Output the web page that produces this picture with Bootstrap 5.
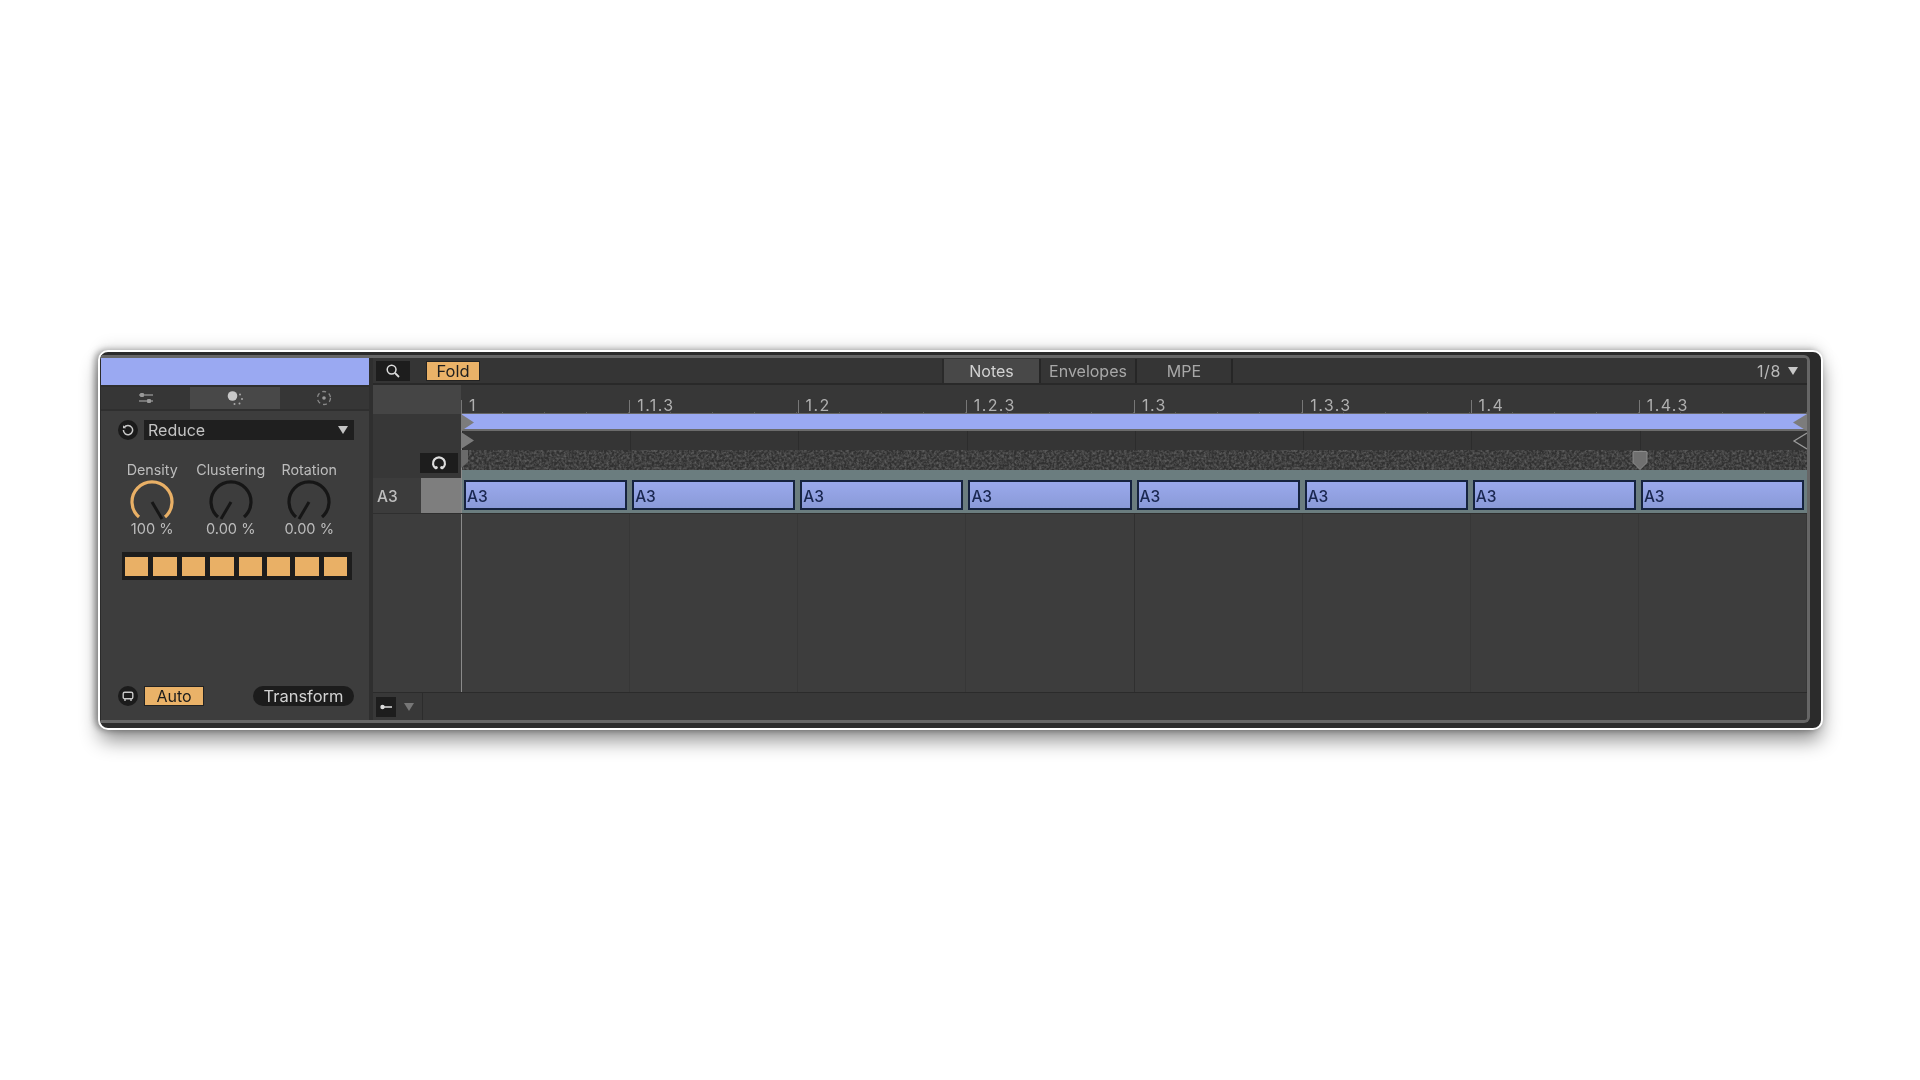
<!DOCTYPE html>
<html lang="en">
<head>
<meta charset="utf-8">
<title>Reduce transform</title>
<link href="https://cdn.jsdelivr.net/npm/bootstrap@5.3.0/dist/css/bootstrap.min.css" rel="stylesheet">
<style>
html,body{height:100%;background:#fff;margin:0}
body{font-family:Inter,"Liberation Sans",sans-serif;overflow:hidden;padding:350px 0 0 98px}
.shell{width:1725px;height:380px;background:#2b2b2b;border:2px solid #fff;border-radius:10px;padding:3px 11px 5px 1px;box-shadow:0 12px 20px -2px rgba(0,0,0,.45),-3px 0 6px rgba(0,0,0,.35),0 -6px 14px rgba(0,0,0,.08)}
.inner{height:100%;background:#3d3d3d;border:solid #666;border-width:3px 3px 3px 0;border-radius:0 6px 6px 0;overflow:hidden;color:#c4c4c4;font-size:16px;line-height:1;filter:blur(.55px)}
.side{width:268px;flex:none}
.clipbar{height:27px;background:#9aa9f2;flex:none}
.seg{height:26px;background:#363636;border-top:2px solid #2f2f2f;border-bottom:2px solid #2f2f2f}
.seg>div{flex:1}
.seg .segact{background:#484848}
.round{width:20px;height:20px;border-radius:50%;background:#1b1b1b;flex:none}
.pick{width:210px;height:20px;background:#1f1f1f;padding:0 6px 0 4px;font-size:16px}
.tri{width:0;height:0;border-left:5.5px solid transparent;border-right:5.5px solid transparent;border-top:8px solid #c4c4c4}
.tri.dim{border-top-color:#777}
.kn{width:78.5px;font-size:14.3px;text-align:center;color:#bcbcbc}
.kn svg{display:block;margin:2px auto -1px}
.kn .vl{font-size:14.6px}
.steps{margin:15px 0 0 21px;width:230px;height:28px;background:#1d1d1d;padding:5px 5px 4px 3px;gap:5px}
.steps i{flex:1;background:#e9b066}
.auto{width:60px;height:20px;background:#eab268;color:#1b1b1b;border:1px solid #222;font-size:16px}
.pill{width:101px;height:20px;border-radius:10px;background:#1c1c1c;font-size:16.5px;color:#d2d2d2}
.pane{border-left:4px solid #2f2f2f;min-width:0;position:relative}
.head{height:27px;background:#353535;flex:none;border-bottom:2px solid #292929;padding:1px 0 0 3px}
.dk{width:34px;height:20px;background:#1d1d1d}
.fold{width:54px;height:20px;background:#eab268;color:#1f1f1f;margin-left:16px;border:1px solid #222;font-size:16.5px}
.mt{height:100%;width:96px;border-right:2px solid #262626;color:#a8a8a8}
.mt.on{background:#484848;color:#d2d2d2;width:99px;border-left:2px solid #2a2a2a}
.ruler{height:29px;flex:none;background:#373737}
.gut{width:88px;flex:none}
.ruler .gut{background:#454545}
.cols{flex:1;display:flex;min-width:0}
.cols>div{flex:1 1 0;min-width:0}
.rc{position:relative;color:#b0b0b0;padding:12px 0 0 8px;font-size:16px;letter-spacing:1.4px}
.rc::before{content:"";position:absolute;left:0;top:15px;bottom:0;border-left:1px solid #777}
.rc::after{content:"";position:absolute;left:0;right:0;bottom:0;height:2px;background:repeating-linear-gradient(90deg,transparent 0 41px,#5c5c5c 41px 42px)}
.tracks{position:relative;flex:1;min-height:0;border-left:1px solid #8a8a8a}
.loopbar{height:17px;background:#9aa9f2;border-bottom:2px solid #6c6c6c;box-shadow:0 -1px 0 #666}
.lane2{height:19px;background:repeating-linear-gradient(90deg,#2c2c2c 0 1px,transparent 1px 168.25px) #353535}
.noiserow{height:20px;background:#313131;position:relative;overflow:hidden}
.noiserow svg{position:absolute;inset:0;width:100%;height:100%}
.strip{height:8px;background:#6b7d7f}
.tl{height:64px;flex:none}
.tl .gut{background:#373737;position:relative}
.lp{position:absolute;left:47px;top:39px;width:38px;height:20px;background:#1d1d1d}
.noterow{height:36px;flex:none;border-bottom:1px solid #2f2f2f}
.nl{width:48px;background:#3c3c3c;padding:11px 0 0 4px;font-size:15.5px;color:#bdbdbd;font-weight:500}
.nk{width:40px;background:#7e7e7e}
.notes{flex:1;background:#6b7d7f;display:flex;min-width:0;border-left:1px solid #8a8a8a}
.notes>div{flex:1 1 0;padding:2px 3px 3px 2px;min-width:0}
.nb{height:100%;background:linear-gradient(#9aa9ec,#8a9ad8);border:2px solid #16233f;color:#1a2750;font-size:15.5px;font-weight:500;padding:7px 0 0 1px}
.grid{flex:1;min-height:0;border-bottom:1px solid #2b2b2b}
.grid .gut{background:#3d3d3d}
.gridc{flex:1;display:flex;border-left:1px solid #8a8a8a}
.gridc>div{flex:1 1 0;min-width:0;border-right:1px solid #373737}
.gridc>div:nth-child(4){border-right-color:#303030}
.foot{height:27px;flex:none;background:#383838;padding-left:3px}
.ov{position:absolute}
</style>
</head>
<body>
<div class="shell">
<div class="inner d-flex">
  <div class="side d-flex flex-column">
    <div class="clipbar"></div>
    <div class="seg d-flex">
      <div class="d-flex align-items-center justify-content-center"><svg width="16" height="14" viewBox="0 0 16 14"><path d="M1 4h14M1 10h14" stroke="#8a8a8a" stroke-width="1.4"/><rect x="2" y="2" width="4" height="4" rx="1" fill="#999"/><rect x="9" y="8" width="4" height="4" rx="1" fill="#999"/></svg></div>
      <div class="segact d-flex align-items-center justify-content-center"><svg width="18" height="16" viewBox="0 0 18 16"><circle cx="6.5" cy="6" r="4.8" fill="#c8c8c8"/><g fill="#aaa"><circle cx="14" cy="4.5" r="1"/><circle cx="16" cy="9" r="1"/><circle cx="13.5" cy="13.5" r="1"/><circle cx="8.5" cy="14" r="1"/></g></svg></div>
      <div class="d-flex align-items-center justify-content-center"><svg width="16" height="16" viewBox="0 0 16 16"><circle cx="8" cy="8" r="6.5" fill="none" stroke="#888" stroke-width="1.3" stroke-dasharray="4 3"/><circle cx="8" cy="8" r="1.8" fill="#999"/></svg></div>
    </div>
    <div class="d-flex align-items-center" style="padding:9px 0 0 17px;gap:6px">
      <div class="round d-flex align-items-center justify-content-center"><svg width="12" height="12" viewBox="0 0 12 12"><path d="M2.2 3.5A4.6 4.6 0 1 1 1.4 6" fill="none" stroke="#c8c8c8" stroke-width="1.5"/><path d="M1 1.2v3h3z" fill="#c8c8c8"/></svg></div>
      <div class="pick d-flex align-items-center justify-content-between"><span>Reduce</span><span class="tri"></span></div>
    </div>
    <div class="d-flex" style="padding:23px 0 0 12px">
      <div class="kn"><div>Density</div><svg width="44" height="44" viewBox="0 0 44 44"><path d="M9 38A20 20 0 1 1 35 38" fill="none" stroke="#e9b066" stroke-width="3.2"/><path d="M22 23L32 40" stroke="#161616" stroke-width="3"/></svg><div class="vl">100 %</div></div>
      <div class="kn"><div>Clustering</div><svg width="44" height="44" viewBox="0 0 44 44"><path d="M9 38A20 20 0 1 1 35 38" fill="none" stroke="#161616" stroke-width="3.2"/><path d="M22 23L12 40" stroke="#161616" stroke-width="3"/></svg><div class="vl">0.00 %</div></div>
      <div class="kn"><div>Rotation</div><svg width="44" height="44" viewBox="0 0 44 44"><path d="M9 38A20 20 0 1 1 35 38" fill="none" stroke="#161616" stroke-width="3.2"/><path d="M22 23L12 40" stroke="#161616" stroke-width="3"/></svg><div class="vl">0.00 %</div></div>
    </div>
    <div class="steps d-flex"><i></i><i></i><i></i><i></i><i></i><i></i><i></i><i></i></div>
    <div class="d-flex align-items-center mt-auto" style="padding:0 15px 14px 17px;gap:6px">
      <div class="round d-flex align-items-center justify-content-center"><svg width="12" height="12" viewBox="0 0 12 12"><rect x="1.2" y="2.2" width="9.6" height="6.6" rx="1.6" fill="none" stroke="#c8c8c8" stroke-width="1.4"/><path d="M3 9v2M9 9v2" stroke="#c8c8c8" stroke-width="1.4"/></svg></div>
      <div class="auto d-flex align-items-center justify-content-center">Auto</div>
      <div class="pill d-flex align-items-center justify-content-center ms-auto">Transform</div>
    </div>
  </div>
  <div class="pane flex-grow-1 d-flex flex-column">
    <div class="head d-flex align-items-center">
      <div class="dk d-flex align-items-center justify-content-center"><svg width="14" height="14" viewBox="0 0 14 14"><circle cx="5.6" cy="5.6" r="4.4" fill="none" stroke="#ddd" stroke-width="1.5"/><path d="M9 9l4 4" stroke="#ddd" stroke-width="1.8"/></svg></div>
      <div class="fold d-flex align-items-center justify-content-center">Fold</div>
      <div class="d-flex align-items-center ms-auto h-100">
        <div class="mt on d-flex align-items-center justify-content-center">Notes</div>
        <div class="mt d-flex align-items-center justify-content-center">Envelopes</div>
        <div class="mt d-flex align-items-center justify-content-center">MPE</div>
      </div>
      <div class="d-flex align-items-center justify-content-end" style="width:574px;padding-right:9px;gap:7px;color:#b8b8b8;letter-spacing:.6px">1/8 <span class="tri" style="border-top-color:#c8c8c8"></span></div>
    </div>
    <div class="ruler d-flex">
      <div class="gut"></div>
      <div class="cols">
        <div class="rc">1</div><div class="rc">1.1.3</div><div class="rc">1.2</div><div class="rc">1.2.3</div><div class="rc">1.3</div><div class="rc">1.3.3</div><div class="rc">1.4</div><div class="rc">1.4.3</div>
      </div>
    </div>
    <div class="tl d-flex">
      <div class="gut"><div class="lp d-flex align-items-center justify-content-center"><svg width="16" height="16" viewBox="0 0 16 16"><path d="M5 13.5A6 6 0 1 1 11 13.5" fill="none" stroke="#ddd" stroke-width="2.2"/><circle cx="5.2" cy="12.6" r="1.6" fill="#ddd"/><circle cx="10.8" cy="12.6" r="1.6" fill="#ddd"/></svg></div></div>
      <div class="tracks">
        <div class="loopbar"></div>
        <div class="lane2"></div>
        <div class="noiserow"><svg aria-hidden="true"><filter id="nz"><feTurbulence type="fractalNoise" baseFrequency="0.4" numOctaves="2" seed="4"/><feColorMatrix values="0 0 0 0 .15  0 0 0 0 .15  0 0 0 0 .15  1.6 0 0 0 -.55"/></filter><rect width="100%" height="100%" filter="url(#nz)"/></svg></div>
        <div class="strip"></div>
        <svg class="ov" style="left:-1px;top:0" width="16" height="56" viewBox="0 0 16 56"><path d="M0 0l13 8.5L0 17zM0 18l13 8.5L0 35z" fill="#7c7c7c"/><path d="M0 36h7v12l-7 6z" fill="#6a6a6a"/></svg>
        <svg class="ov" style="right:0;top:0" width="15" height="36" viewBox="0 0 15 36"><path d="M15 0L1 8.5 15 17z" fill="#7c7c7c"/><path d="M15 19L2 27l13 8" fill="none" stroke="#9a9a9a" stroke-width="1.3"/></svg>
        <svg class="ov" style="left:1170px;top:37px" width="16" height="19" viewBox="0 0 16 19"><path d="M1 1.5q0-1 1-1h12q1 0 1 1v10l-7 7-7-7z" fill="#707070" stroke="#8c8c8c"/></svg>
      </div>
    </div>
    <div class="noterow d-flex">
      <div class="nl">A3</div><div class="nk"></div>
      <div class="notes"><div><div class="nb">A3</div></div><div><div class="nb">A3</div></div><div><div class="nb">A3</div></div><div><div class="nb">A3</div></div><div><div class="nb">A3</div></div><div><div class="nb">A3</div></div><div><div class="nb">A3</div></div><div><div class="nb">A3</div></div></div>
    </div>
    <div class="grid d-flex">
      <div class="gut"></div>
      <div class="gridc"><div></div><div></div><div></div><div></div><div></div><div></div><div></div><div></div></div>
    </div>
    <div class="foot d-flex align-items-center">
      <div class="d-flex align-items-center justify-content-center" style="width:20px;height:20px;background:#1d1d1d"><svg width="12" height="6" viewBox="0 0 12 6"><circle cx="2.5" cy="3" r="2.2" fill="#ddd"/><path d="M3 3h9" stroke="#ddd" stroke-width="1.5"/></svg></div>
      <span class="tri dim" style="margin-left:8px"></span>
      <div class="h-100 ms-2" style="border-left:1px solid #2c2c2c"></div>
    </div>
  </div>
</div>
</div>
<script src="https://cdn.jsdelivr.net/npm/bootstrap@5.3.0/dist/js/bootstrap.bundle.min.js"></script>
</body>
</html>
